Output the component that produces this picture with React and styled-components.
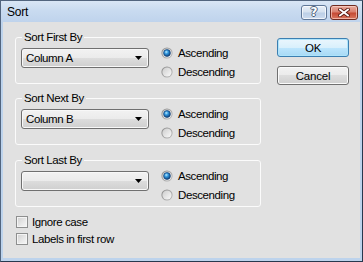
import React from "react";
import styled, { createGlobalStyle } from "styled-components";

const Global = createGlobalStyle`
  html, body { margin: 0; padding: 0; background: #ffffff; }
  body { font-family: "Liberation Sans", Arial, sans-serif; }
  * { box-sizing: border-box; }
`;

const Window = styled.div`
  width: 363px;
  height: 262px;
  display: flex;
  flex-direction: column;
  background: #bdd3ec;
  border-top: 1px solid #52657e;
  border-left: 1px solid #52657e;
  border-right: 1px solid #27384e;
  border-bottom: 1px solid #27384e;
  overflow: hidden;
`;

const TitleBar = styled.div`
  height: 21px;
  flex: none;
  display: flex;
  align-items: center;
  padding: 0 4px 0 6px;
  background: linear-gradient(#d9e6f5 0%, #c9dbf0 45%, #bfd3ec 100%);
`;

const Title = styled.div`
  flex: 1;
  font-size: 12px;
  letter-spacing: -0.2px;
  color: #000;
  padding-top: 1px;
`;

const CaptionButtons = styled.div`
  display: flex;
  gap: 3px;
  margin-top: 1px;
`;

const CaptionButton = styled.div`
  width: ${(p) => (p.$variant === "close" ? 28 : 26)}px;
  height: 15px;
  border-radius: 3px;
  display: flex;
  align-items: center;
  justify-content: center;
  border: 1px solid ${(p) => (p.$variant === "close" ? "#6f2a20" : "#5f7797")};
  background: ${(p) =>
    p.$variant === "close"
      ? "linear-gradient(#e9ab9f 0%, #d9806f 45%, #c54a35 55%, #d9765f 100%)"
      : "linear-gradient(#e8eff8 0%, #d6e2f0 45%, #bccfe6 55%, #cddcef 100%)"};
  box-shadow: inset 0 0 0 1px ${(p) => (p.$variant === "close" ? "rgba(255,220,210,0.6)" : "rgba(255,255,255,0.7)")};
`;

const HelpGlyph = styled.span`
  font-family: "DejaVu Sans", sans-serif;
  font-weight: bold;
  font-size: 12px;
  line-height: 12px;
  color: #ffffff;
  text-shadow: 1px 0 0 #4d5f78, -1px 0 0 #4d5f78, 0 1px 0 #4d5f78, 0 -1px 0 #4d5f78;
`;

const Client = styled.div`
  flex: 1;
  margin: 0 2px 3px 2px;
  background: #e1e1e1;
  display: flex;
  align-items: flex-start;
  padding: 15px 0 0 12px;
  font-size: 11.5px;
  letter-spacing: -0.4px;
  color: #000;
`;

const MainColumn = styled.div`
  width: 246px;
  display: flex;
  flex-direction: column;
`;

const GroupBox = styled.div`
  position: relative;
  height: 47px;
  margin-top: ${(p) => p.$mt || 0}px;
  border: 1px solid #fbfbfb;
  border-radius: 3px;
  padding: 5px 5px 0 5px;
  display: flex;
  align-items: flex-start;
`;

const GroupLabel = styled.span`
  position: absolute;
  top: -7px;
  left: 6px;
  padding: 0 2px;
  line-height: 13px;
  background: #e1e1e1;
`;

const Combo = styled.div`
  width: 128px;
  height: 20px;
  margin-top: 5px;
  border: 1px solid #707070;
  border-radius: 3px;
  display: flex;
  align-items: center;
  padding: 0 3px 0 4px;
  background: linear-gradient(#f2f2f2 0%, #ebebeb 50%, #dddddd 50%, #cfcfcf 100%);
  box-shadow: inset 0 0 0 1px #f8f8f8;
`;

const ComboText = styled.span`
  flex: 1;
  line-height: 13px;
`;

const RadioColumn = styled.div`
  margin-left: 12px;
  display: flex;
  flex-direction: column;
`;

const OptionRow = styled.label`
  height: ${(p) => p.$h || 19}px;
  display: flex;
  align-items: center;
  gap: ${(p) => p.$gap || 5}px;
`;

const CheckList = styled.div`
  margin-top: 6px;
  display: flex;
  flex-direction: column;
  padding-left: 1px;
`;

const CheckBox = styled.span`
  width: 12px;
  height: 12px;
  flex: none;
  border: 1px solid #8e8f8f;
  background: linear-gradient(135deg, #cfcfcf 0%, #e9e9e9 60%, #f7f7f7 100%);
  box-shadow: inset 0 0 0 1px #f4f4f4;
`;

const ButtonColumn = styled.div`
  margin-left: 16px;
  margin-top: 1px;
  width: 72px;
  display: flex;
  flex-direction: column;
  gap: 9px;
`;

const PushButton = styled.div`
  height: 19px;
  border-radius: 3px;
  display: flex;
  align-items: center;
  justify-content: center;
  letter-spacing: -0.2px;
  border: 1px solid ${(p) => (p.$default ? "#3c7fb1" : "#707070")};
  background: ${(p) =>
    p.$default
      ? "linear-gradient(#eaf6fd 0%, #d9f0fc 50%, #bee6fd 50%, #a7d9f5 100%)"
      : "linear-gradient(#f2f2f2 0%, #ebebeb 50%, #dddddd 50%, #cfcfcf 100%)"};
  box-shadow: inset 0 0 0 1px ${(p) => (p.$default ? "#aee4fb" : "#fbfbfb")};
`;

const Radio = ({ checked }) => (
  <svg width="12" height="12" viewBox="0 0 12 12" style={{ flex: "none" }}>
    <defs>
      <linearGradient id="rRing" x1="0" y1="0" x2="1" y2="1">
        <stop offset="0" stopColor="#8a8a8a" />
        <stop offset="1" stopColor="#bcbcbc" />
      </linearGradient>
      <linearGradient id="rFill" x1="0" y1="0" x2="1" y2="1">
        <stop offset="0" stopColor="#cdcdcd" />
        <stop offset="1" stopColor="#fafafa" />
      </linearGradient>
      <radialGradient id="rDot" cx="0.4" cy="0.35" r="0.7">
        <stop offset="0" stopColor="#b8ebff" />
        <stop offset="0.4" stopColor="#2f95dd" />
        <stop offset="1" stopColor="#0d3a70" />
      </radialGradient>
    </defs>
    <circle cx="6" cy="6" r="5.6" fill="url(#rRing)" />
    <circle cx="6" cy="6" r="4.6" fill="url(#rFill)" />
    {checked && <circle cx="6" cy="6" r="3.4" fill="url(#rDot)" stroke="#123f75" strokeWidth="0.7" />}
  </svg>
);

const DropArrow = () => (
  <svg width="7" height="4" viewBox="0 0 7 4" style={{ flex: "none", marginRight: "3px" }}>
    <path d="M0 0 H7 L3.5 4 Z" fill="#000" />
  </svg>
);

const CloseIcon = () => (
  <svg width="12" height="9" viewBox="0 0 12 9">
    <path d="M2 1.5 L10 7.5 M10 1.5 L2 7.5" stroke="#5b1b12" strokeWidth="3.6" strokeLinecap="square" />
    <path d="M2 1.5 L10 7.5 M10 1.5 L2 7.5" stroke="#ffffff" strokeWidth="1.8" strokeLinecap="square" />
  </svg>
);

const SortGroup = ({ label, value, mt }) => (
  <GroupBox $mt={mt}>
    <GroupLabel>{label}</GroupLabel>
    <Combo>
      <ComboText>{value}</ComboText>
      <DropArrow />
    </Combo>
    <RadioColumn>
      <OptionRow>
        <Radio checked />
        Ascending
      </OptionRow>
      <OptionRow>
        <Radio />
        Descending
      </OptionRow>
    </RadioColumn>
  </GroupBox>
);

export default function App() {
  return (
    <>
      <Global />
      <Window>
        <TitleBar>
          <Title>Sort</Title>
          <CaptionButtons>
            <CaptionButton $variant="help">
              <HelpGlyph>?</HelpGlyph>
            </CaptionButton>
            <CaptionButton $variant="close">
              <CloseIcon />
            </CaptionButton>
          </CaptionButtons>
        </TitleBar>
        <Client>
          <MainColumn>
            <SortGroup label="Sort First By" value="Column A" />
            <SortGroup label="Sort Next By" value="Column B" mt={14} />
            <SortGroup label="Sort Last By" value="" mt={15} />
            <CheckList>
              <OptionRow $h={17} $gap={4}>
                <CheckBox />
                Ignore case
              </OptionRow>
              <OptionRow $h={17} $gap={4}>
                <CheckBox />
                Labels in first row
              </OptionRow>
            </CheckList>
          </MainColumn>
          <ButtonColumn>
            <PushButton $default>OK</PushButton>
            <PushButton>Cancel</PushButton>
          </ButtonColumn>
        </Client>
      </Window>
    </>
  );
}
